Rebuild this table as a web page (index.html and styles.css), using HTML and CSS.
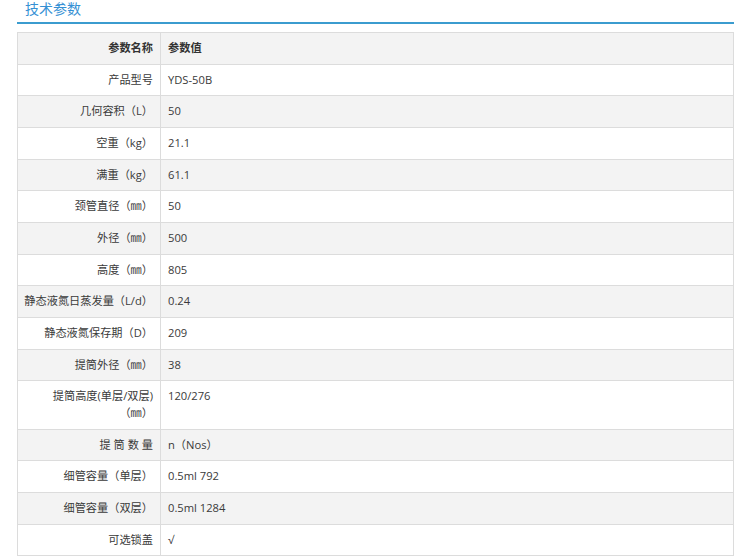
FILE: index.html
```html
<!DOCTYPE html>
<html lang="zh-CN">
<head>
<meta charset="utf-8">
<title>技术参数</title>
<link rel="stylesheet" href="styles.css">
</head>
<body>
<div class="wrap">
  <h2 class="title"><span>技术参数</span></h2>
  <table class="spec">
    <colgroup><col class="c-name"><col></colgroup>
    <tr class="head"><th class="k">参数名称</th><th class="v">参数值</th></tr>
    <tr><td class="k">产品型号</td><td class="v">YDS-50B</td></tr>
    <tr><td class="k">几何容积（L）</td><td class="v">50</td></tr>
    <tr><td class="k">空重（kg）</td><td class="v">21.1</td></tr>
    <tr><td class="k">满重（kg）</td><td class="v">61.1</td></tr>
    <tr><td class="k">颈管直径（㎜）</td><td class="v">50</td></tr>
    <tr><td class="k">外径（㎜）</td><td class="v">500</td></tr>
    <tr><td class="k">高度（㎜）</td><td class="v">805</td></tr>
    <tr><td class="k">静态液氮日蒸发量（L/d）</td><td class="v">0.24</td></tr>
    <tr><td class="k">静态液氮保存期（D）</td><td class="v">209</td></tr>
    <tr><td class="k">提筒外径（㎜）</td><td class="v">38</td></tr>
    <tr><td class="k">提筒高度(单层/双层)<br>（㎜）</td><td class="v top">120/276</td></tr>
    <tr><td class="k">提 筒 数 量</td><td class="v">n（Nos）</td></tr>
    <tr><td class="k">细管容量（单层）</td><td class="v">0.5ml 792</td></tr>
    <tr><td class="k">细管容量（双层）</td><td class="v">0.5ml 1284</td></tr>
    <tr><td class="k">可选锁盖</td><td class="v">√</td></tr>
  </table>
</div>
</body>
</html>
```
FILE: styles.css
```css
html, body {
  margin: 0;
  padding: 0;
  background: #fff;
}
body {
  font-family: "Open Sans", "Noto Sans CJK SC", sans-serif;
  font-size: 11.2px;
  color: #3a3a3a;
}
.wrap {
  margin-left: 17px;
  width: 717px;
}
.title {
  margin: 0;
  padding: 0 0 0 8px;
  line-height: 18px;
  font-size: 14px;
  font-weight: normal;
  color: #3590d4;
  border-bottom: 2px solid #3b9ccf;
  box-sizing: border-box;
  height: 24px;
}
.spec {
  margin-top: 8px;
  width: 717px;
  border-collapse: collapse;
  table-layout: fixed;
}
.c-name {
  width: 143px;
}
.spec td, .spec th {
  border: 1px solid #dcdcdc;
  padding: 7px 7px;
  line-height: 16.65px;
  vertical-align: middle;
}
.spec tr:nth-child(odd) td,
.spec tr.head th {
  background: #f3f3f3;
}
.spec .k {
  text-align: right;
  padding-right: 7px;
  padding-left: 0;
  white-space: nowrap;
}
.spec .v {
  text-align: left;
  padding-left: 7px;
}
.spec th {
  font-weight: bold;
  color: #333;
}
.spec .top {
  vertical-align: top;
}
```
